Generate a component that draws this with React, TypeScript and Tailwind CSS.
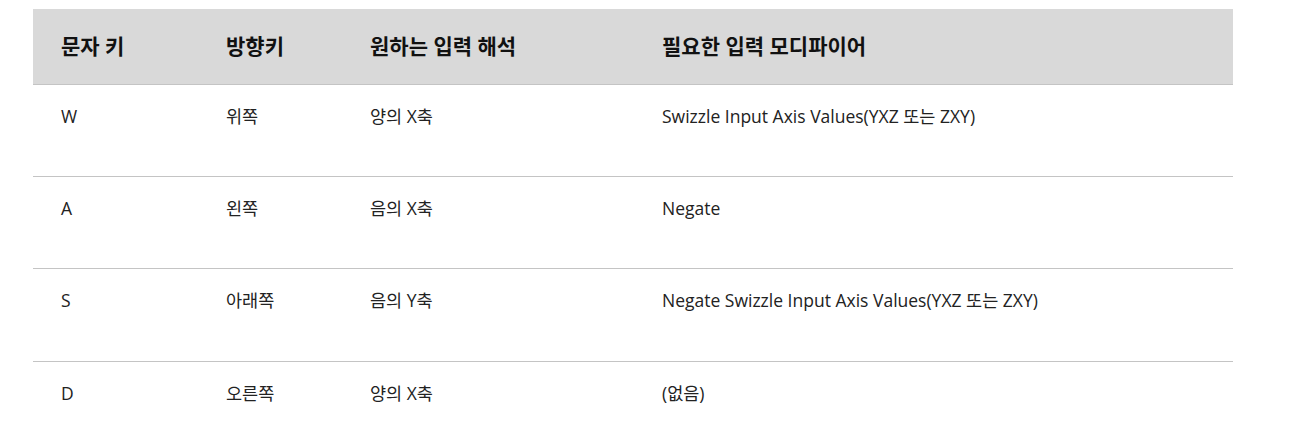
const rows = [
  { key: "W", dir: "위쪽", axis: "양의 X축", mod: "Swizzle Input Axis Values(YXZ 또는 ZXY)" },
  { key: "A", dir: "왼쪽", axis: "음의 X축", mod: "Negate" },
  { key: "S", dir: "아래쪽", axis: "음의 Y축", mod: "Negate Swizzle Input Axis Values(YXZ 또는 ZXY)" },
  { key: "D", dir: "오른쪽", axis: "양의 X축", mod: "(없음)" },
];

export default function App() {
  return (
    <div
      className="min-h-screen bg-white pt-[9px] pl-[33px] text-[#222]"
      style={{ fontFamily: '"Open Sans", "Noto Sans CJK KR", sans-serif' }}
    >
      <table className="w-[1200px] border-collapse text-left">
        <thead>
          <tr className="h-[75px] bg-[#d9d9d9] border-b border-[#c4c4c4] text-[#111]">
            <th className="w-[165px] pl-[28px] text-[21px] font-bold">문자 키</th>
            <th className="w-[144px] pl-[28px] text-[21px] font-bold">방향키</th>
            <th className="w-[292px] pl-[28px] text-[21px] font-bold">원하는 입력 해석</th>
            <th className="pl-[28px] text-[21px] font-bold">필요한 입력 모디파이어</th>
          </tr>
        </thead>
        <tbody>
          {rows.map((r, i) => (
            <tr
              key={r.key}
              className={`border-b border-[#c4c4c4] align-top text-[17.5px] ${i === 2 ? "h-[93px]" : "h-[92px]"}`}
            >
              <td className="pl-[28px] pt-[19px] leading-6">{r.key}</td>
              <td className="pl-[28px] pt-[19px] leading-6">{r.dir}</td>
              <td className="pl-[28px] pt-[19px] leading-6">{r.axis}</td>
              <td className="pl-[28px] pt-[19px] leading-6">{r.mod}</td>
            </tr>
          ))}
        </tbody>
      </table>
    </div>
  );
}
